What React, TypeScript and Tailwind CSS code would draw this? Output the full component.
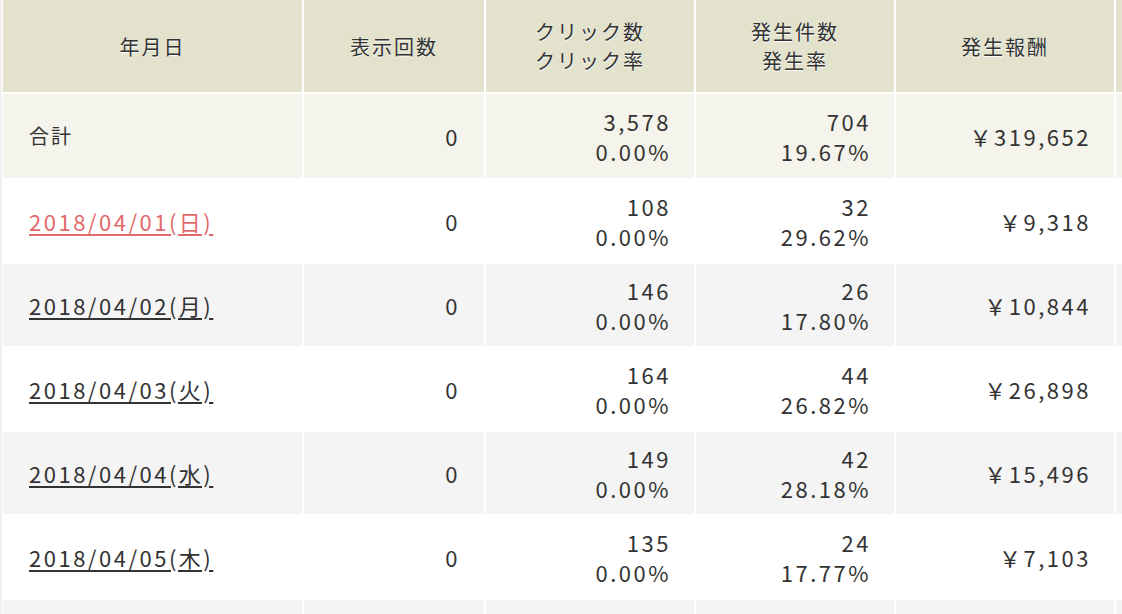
import React from "react";

type Row = {
  date: string;
  imp: string;
  clicks: string;
  ctr: string;
  conv: string;
  cvr: string;
  reward: string;
  red?: boolean;
};

const rows: Row[] = [
  { date: "2018/04/01(日)", imp: "0", clicks: "108", ctr: "0.00%", conv: "32", cvr: "29.62%", reward: "￥9,318", red: true },
  { date: "2018/04/02(月)", imp: "0", clicks: "146", ctr: "0.00%", conv: "26", cvr: "17.80%", reward: "￥10,844" },
  { date: "2018/04/03(火)", imp: "0", clicks: "164", ctr: "0.00%", conv: "44", cvr: "26.82%", reward: "￥26,898" },
  { date: "2018/04/04(水)", imp: "0", clicks: "149", ctr: "0.00%", conv: "42", cvr: "28.18%", reward: "￥15,496" },
  { date: "2018/04/05(木)", imp: "0", clicks: "135", ctr: "0.00%", conv: "24", cvr: "17.77%", reward: "￥7,103" },
];

const grid = "grid grid-cols-[299px_180px_208px_198px_218px_1fr] gap-x-[2px]";
const num = "text-[22px] tracking-[2.5px]";

export default function App() {
  return (
    <div
      className="w-[1122px] h-[614px] overflow-hidden bg-white text-[#333] text-[20px] tracking-[2px]"
      style={{ fontFamily: '"Noto Sans CJK JP", "Noto Sans", sans-serif' }}
    >
      <div className="border-l-2 border-[#f0f0f0] pl-px flex flex-col gap-y-[2px] h-[614px]">
        {/* header */}
        <div className={`${grid} h-[92px] shrink-0`}>
          {["年月日", "表示回数", "クリック数\nクリック率", "発生件数\n発生率", "発生報酬", ""].map((h, i) => (
            <div
              key={i}
              className="bg-[#e3e3cd] flex items-center justify-center text-center whitespace-pre-line leading-[29px] [text-shadow:0_1px_1px_#fff]"
            >
              {h}
            </div>
          ))}
        </div>
        {/* total */}
        <div className={`${grid} h-[84px] shrink-0`}>
          <div className="bg-[#f4f4ec] flex items-center pl-[26px]">合計</div>
          <div className={`bg-[#f4f4ec] flex items-center justify-end pr-[24px] ${num}`}>0</div>
          <div className={`bg-[#f4f4ec] flex flex-col items-end justify-center pr-[23px] leading-[30px] ${num}`}>
            <span>3,578</span>
            <span>0.00%</span>
          </div>
          <div className={`bg-[#f4f4ec] flex flex-col items-end justify-center pr-[23px] leading-[30px] ${num}`}>
            <span>704</span>
            <span>19.67%</span>
          </div>
          <div className={`bg-[#f4f4ec] flex items-center justify-end pr-[23px] ${num}`}>￥319,652</div>
          <div className="bg-[#f4f4ec]" />
        </div>
        {rows.map((r, idx) => {
          const bg = idx % 2 === 0 ? "bg-white" : "bg-[#f4f4f4]";
          return (
            <div key={r.date} className={`${grid} h-[82px] shrink-0`}>
              <div className={`${bg} flex items-center pl-[26px]`}>
                <a
                  href="#"
                  className={`underline underline-offset-[3px] ${num} ${r.red ? "text-[#e26a6a]" : "text-[#333]"}`}
                >
                  {r.date}
                </a>
              </div>
              <div className={`${bg} flex items-center justify-end pr-[24px] ${num}`}>{r.imp}</div>
              <div className={`${bg} flex flex-col items-end justify-center pr-[23px] leading-[30px] ${num}`}>
                <span>{r.clicks}</span>
                <span>{r.ctr}</span>
              </div>
              <div className={`${bg} flex flex-col items-end justify-center pr-[23px] leading-[30px] ${num}`}>
                <span>{r.conv}</span>
                <span>{r.cvr}</span>
              </div>
              <div className={`${bg} flex items-center justify-end pr-[23px] ${num}`}>{r.reward}</div>
              <div className={bg} />
            </div>
          );
        })}
        <div className={`${grid} h-[82px] shrink-0`}>
          {[0, 1, 2, 3, 4, 5].map((i) => (
            <div key={i} className="bg-[#f4f4f4]" />
          ))}
        </div>
      </div>
    </div>
  );
}
